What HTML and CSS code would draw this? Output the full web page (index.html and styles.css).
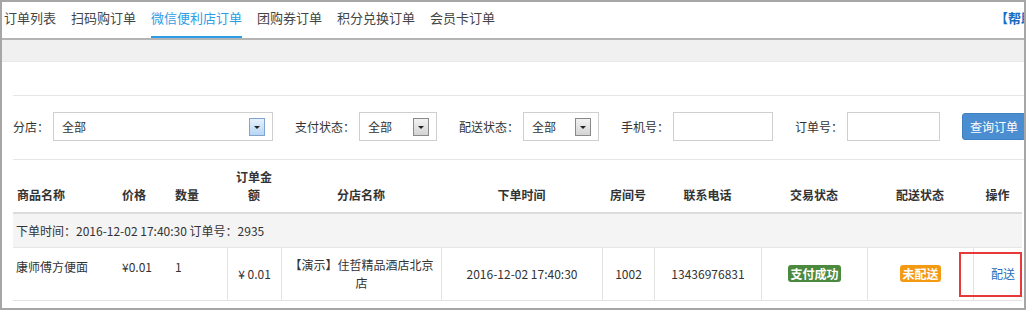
FILE: index.html
```html
<!DOCTYPE html>
<html lang="zh-CN">
<head>
  <meta charset="UTF-8">
  <title>微信便利店订单</title>
  <link rel="stylesheet" href="styles.css">
</head>
<body>

  <div class="frame">
    <div class="tabs">
      <a class="tab">订单列表</a>
      <a class="tab">扫码购订单</a>
      <a class="tab active">微信便利店订单</a>
      <a class="tab">团购券订单</a>
      <a class="tab">积分兑换订单</a>
      <a class="tab">会员卡订单</a>
      <a class="help">【帮助中心】</a>
    </div>
    <div class="band"></div>

    <div class="main">
      <div class="blank"></div>

      <div class="filter">
        <div class="field">
          <span class="label">分店：</span>
          <div class="select shop"><span>全部</span><i class="arrow focus"></i></div>
        </div>
        <div class="field">
          <span class="label">支付状态：</span>
          <div class="select pay"><span>全部</span><i class="arrow"></i></div>
        </div>
        <div class="field">
          <span class="label">配送状态：</span>
          <div class="select ship"><span>全部</span><i class="arrow"></i></div>
        </div>
        <div class="field">
          <span class="label">手机号：</span>
          <input class="text phone" type="text">
        </div>
        <div class="field">
          <span class="label">订单号：</span>
          <input class="text order-no" type="text">
        </div>
        <button class="btn">查询订单</button>
      </div>

      <table class="orders">
        <colgroup>
          <col style="width:105px"><col style="width:53px"><col style="width:56px">
          <col style="width:54px"><col style="width:160px"><col style="width:161px">
          <col style="width:52px"><col style="width:107px"><col style="width:106px">
          <col style="width:106px"><col style="width:49px">
        </colgroup>
        <thead>
          <tr>
            <th class="left">商品名称</th>
            <th class="left">价格</th>
            <th class="left">数量</th>
            <th>订单金额</th>
            <th>分店名称</th>
            <th>下单时间</th>
            <th>房间号</th>
            <th>联系电话</th>
            <th>交易状态</th>
            <th>配送状态</th>
            <th>操作</th>
          </tr>
        </thead>
        <tbody>
          <tr class="group">
            <td colspan="11">下单时间：2016-12-02 17:40:30 订单号：2935</td>
          </tr>
          <tr class="item">
            <td class="top">康师傅方便面</td>
            <td class="top">¥0.01</td>
            <td class="top">1</td>
            <td class="cell">¥ 0.01</td>
            <td class="cell">【演示】住哲精品酒店北京店</td>
            <td class="cell">2016-12-02 17:40:30</td>
            <td class="cell">1002</td>
            <td class="cell">13436976831</td>
            <td class="cell"><span class="badge paid">支付成功</span></td>
            <td class="cell"><span class="badge pending">未配送</span></td>
            <td class="cell op"><a class="link">配送</a><span class="mark"></span></td>
          </tr>
        </tbody>
      </table>
    </div>
  </div>

</body>
</html>
```

FILE: styles.css
```css
* {
  box-sizing: border-box;
}

body {
  margin: 0;
  font-family: "Noto Sans CJK SC", "Noto Sans", sans-serif;
  font-size: 12px;
  color: #333;
  background: #fff;
}

.frame {
  width: 1026px;
  height: 310px;
  border: 2px solid #a6a6a6;
  overflow: hidden;
}

/* tabs */
.tabs {
  display: flex;
  width: 1071px;
  height: 38px;
  padding-left: 2px;
  border-bottom: 2px solid #b4b4b4;
}

.tab {
  margin-right: 15px;
  padding-bottom: 3px;
  line-height: 31px;
  font-size: 13px;
  color: #444;
  border-bottom: 2px solid transparent;
  white-space: nowrap;
}

.tab.active {
  color: #2c9de6;
  border-bottom-color: #2c9de6;
}

.help {
  margin-left: auto;
  line-height: 31px;
  font-size: 13px;
  font-weight: bold;
  color: #1a6cc4;
  white-space: nowrap;
}

.band {
  height: 22px;
  background: #f0f0f0;
  border-bottom: 1px solid #e8e8e8;
}

.main {
  padding-left: 11px;
}

.blank {
  height: 33px;
}

/* filter */
.filter {
  display: flex;
  align-items: center;
  width: 1040px;
  padding: 16px 0 18px;
  border-top: 1px solid #e6e6e6;
  border-bottom: 1px solid #e6e6e6;
}

.field {
  display: flex;
  align-items: center;
  margin-right: 22px;
}

.label {
  margin-right: 4px;
  white-space: nowrap;
}

.select {
  display: flex;
  align-items: center;
  justify-content: space-between;
  height: 29px;
  padding: 0 7px 0 8px;
  border: 1px solid #cfcfcf;
  background: #fff;
}

.select.shop { width: 220px; }
.select.pay { width: 78px; }
.select.ship { width: 76px; }

.arrow {
  position: relative;
  width: 16px;
  height: 18px;
  border: 1px solid #8a8a8a;
  background: linear-gradient(#f2f2f2, #d4d4d4);
}

.arrow.focus {
  border-color: #7ea4cf;
  background: linear-gradient(#e6f1fc, #b8d6f4);
}

.arrow::after {
  content: "";
  position: absolute;
  left: 4px;
  top: 7px;
  border-left: 3px solid transparent;
  border-right: 3px solid transparent;
  border-top: 3px solid #222;
}

.text {
  height: 29px;
  border: 1px solid #cfcfcf;
  padding: 0 6px;
  font: inherit;
}

.text.phone { width: 100px; }
.text.order-no { width: 93px; }

.btn {
  width: 64px;
  height: 27px;
  padding: 0;
  border: 1px solid #3f80c2;
  border-radius: 3px;
  background: #4a8dd0;
  color: #fff;
  font: inherit;
  flex-shrink: 0;
}

/* table */
.orders {
  width: 1009px;
  table-layout: fixed;
  border-collapse: separate;
  border-spacing: 0;
}

.orders th {
  height: 54px;
  padding: 0 4px 8px;
  vertical-align: bottom;
  line-height: 18px;
  font-weight: bold;
  text-align: center;
  border-bottom: 2px solid #dcdcdc;
}

.orders th.left {
  text-align: left;
}

.orders td {
  padding: 0 4px;
  line-height: 18px;
}

.group td {
  height: 34px;
  padding-left: 3px;
  background: #f4f4f4;
  border-bottom: 1px solid #e6e6e6;
}

.item td {
  height: 53px;
  border-bottom: 1px solid #e3e3e3;
}

.item td.top {
  vertical-align: top;
  padding-top: 10px;
  white-space: nowrap;
}

.item td:first-child {
  padding-left: 3px;
}

.item td.cell {
  text-align: center;
  vertical-align: middle;
  border-left: 1px solid #e3e3e3;
}

.badge {
  display: inline-block;
  padding: 0 2px;
  line-height: 17px;
  border-radius: 3px;
  color: #fff;
  font-weight: bold;
}

.badge.paid {
  background: #4b8a3e;
}

.badge.pending {
  background: #f39a12;
}

.op {
  position: relative;
}

.link {
  display: inline-block;
  margin-left: 10px;
  color: #2b6db8;
}

.mark {
  position: absolute;
  left: -15px;
  top: 4px;
  width: 63px;
  height: 45px;
  border: 2px solid #e8393a;
}
```
